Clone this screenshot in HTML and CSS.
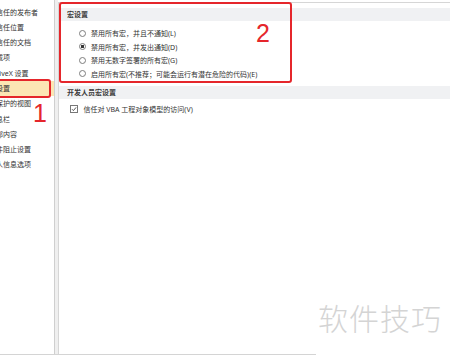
FILE: index.html
```html
<!DOCTYPE html>
<html lang="zh-CN">
<head>
  <meta charset="UTF-8" />
  <meta name="viewport" content="width=device-width, initial-scale=1.0" />
  <title>信任中心 - 宏设置</title>
  <link rel="stylesheet" href="styles.css">
</head>
<body>
  <div class="dialog">
    <nav class="nav">
      <div class="nav-item">受信任的发布者</div>
      <div class="nav-item">受信任位置</div>
      <div class="nav-item">受信任的文档</div>
      <div class="nav-item">加载项</div>
      <div class="nav-item">ActiveX 设置</div>
      <div class="nav-item active">宏设置</div>
      <div class="nav-item">受保护的视图</div>
      <div class="nav-item">消息栏</div>
      <div class="nav-item">外部内容</div>
      <div class="nav-item">文件阻止设置</div>
      <div class="nav-item">个人信息选项</div>
    </nav>
    <div class="gutter"></div>
    <main class="content">
      <div class="section-title">宏设置</div>
      <div class="options">
        <label class="option"><span class="radio"></span>禁用所有宏，并且不通知(L)</label>
        <label class="option"><span class="radio checked"></span>禁用所有宏，并发出通知(D)</label>
        <label class="option"><span class="radio"></span>禁用无数字签署的所有宏(G)</label>
        <label class="option"><span class="radio"></span>启用所有宏(不推荐；可能会运行有潜在危险的代码)(E)</label>
      </div>
      <div class="section-title">开发人员宏设置</div>
      <label class="option check-row">
        <span class="checkbox">
          <svg width="6" height="6" viewBox="0 0 6 6"><path d="M1 3.2 L2.4 4.6 L5.1 1.4" fill="none" stroke="#444" stroke-width="0.9"/></svg>
        </span>信任对 VBA 工程对象模型的访问(V)
      </label>
    </main>
  </div>

  <!-- annotations drawn over the screenshot -->
  <div class="mark mark-nav"></div>
  <div class="mark mark-macro"></div>
  <span class="num num-1">1</span>
  <span class="num num-2">2</span>

  <div class="watermark">软件技巧</div>
</body>
</html>
```

FILE: styles.css
```css
html, body {
  margin: 0;
  padding: 0;
  background: #fff;
  overflow: hidden;
}
body {
  font-family: "Noto Sans", "Noto Sans CJK SC", sans-serif;
  font-size: 7px;
  color: #333;
}

.dialog {
  display: flex;
  height: 355px;
  box-sizing: border-box;
  border-bottom: 1px solid #d4d4d4;
}

.nav {
  width: 54px;
  flex: none;
  border-right: 1px solid #cfcfcf;
  padding-top: 4.5px;
  overflow: hidden;
}
.nav-item {
  height: 15.3px;
  line-height: 15.3px;
  margin-left: -11px;
  white-space: nowrap;
}
.nav-item.active {
  background: #fce6b4;
}

.gutter {
  width: 3px;
  flex: none;
  background: #efefef;
}

.content {
  flex: 1;
  margin-top: 2px;
  padding-top: 5px;
  border-top: 1px solid #d6d6d6;
  border-left: 1px solid #d6d6d6;
}

.section-title {
  height: 13px;
  line-height: 13px;
  padding-left: 8px;
  background: #f0f1f3;
  font-weight: bold;
  color: #3a3a3a;
}

.options {
  padding: 5.5px 0;
}
.option {
  display: flex;
  align-items: center;
  gap: 5px;
  height: 13.5px;
  padding-left: 20px;
  white-space: nowrap;
}
.radio {
  width: 7px;
  height: 7px;
  box-sizing: border-box;
  border: 1px solid #7d7d7d;
  border-radius: 50%;
  background: #fff;
}
.radio.checked {
  background: radial-gradient(circle, #333 0 1.4px, #fff 1.8px);
}

.check-row {
  margin-top: 3px;
  height: 13px;
  padding-left: 11px;
  gap: 5.5px;
}
.checkbox {
  display: flex;
  width: 6px;
  height: 6px;
  border: 0.8px solid #777;
  background: #fff;
}

.mark {
  position: absolute;
  box-sizing: border-box;
  border: 2px solid #e5262b;
  border-radius: 3px;
}
.mark-nav {
  left: -3px;
  top: 79px;
  width: 54px;
  height: 19px;
}
.mark-macro {
  left: 59px;
  top: 2px;
  width: 233px;
  height: 81px;
}

.num {
  position: absolute;
  font-family: "Liberation Sans", Arial, sans-serif;
  font-size: 25px;
  line-height: 1;
  color: #e5262b;
}
.num-1 {
  left: 33px;
  top: 101px;
}
.num-2 {
  left: 256px;
  top: 21px;
}

.watermark {
  position: absolute;
  left: 316px;
  top: 298px;
  right: 0;
  bottom: 0;
  padding: 6px 0 0 2px;
  background: #fff;
  font-size: 30px;
  line-height: 30px;
  font-weight: 300;
  letter-spacing: 1px;
  color: #d4d4d4;
}
```
